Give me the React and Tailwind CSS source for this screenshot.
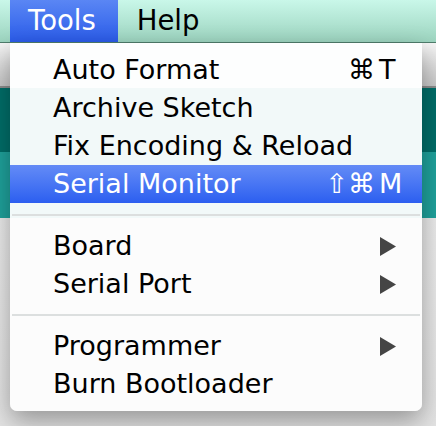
import React from 'react';

const font = { fontFamily: '"DejaVu Sans", "Liberation Sans", sans-serif' };

const Arrow = () => (
  <svg width="16" height="19" viewBox="0 0 16 19">
    <polygon points="0,0 16,9.5 0,19" fill="#454545" />
  </svg>
);

const Item = ({ label, mods, keyChar, submenu, active }) => (
  <div
    className={`relative flex h-[38px] items-center pl-[43px] text-[27px] leading-[38px] ${
      active ? 'bg-gradient-to-b from-[#648bf6] to-[#2c5ef0] text-white' : 'text-black'
    }`}
  >
    <span className="flex-1 whitespace-nowrap">{label}</span>
    {keyChar && (
      <span className="flex pr-[20px]">
        <span className="text-right">{mods}</span>
        <span className="w-[27px] pl-[4px] text-left">{keyChar}</span>
      </span>
    )}
    {submenu && (
      <span className="flex pr-[26px]">
        <Arrow />
      </span>
    )}
  </div>
);

const Separator = () => (
  <div className="px-[2px] py-[11px]">
    <div className="h-[2px] bg-[#dcdfdf]" />
  </div>
);

export default function App() {
  return (
    <div className="relative h-[426px] w-[436px] overflow-hidden bg-[#e9e9e9]" style={font}>
      {/* menu bar */}
      <div className="flex h-[43px] items-stretch border-b border-[#4f7d6c] bg-gradient-to-b from-[#c9f7e9] to-[#9cd4bf] pl-[10px] text-[27.5px] text-black">
        <div className="flex items-center bg-gradient-to-b from-[#5a86f4] to-[#2b5be9] pl-[18px] pr-[22px] text-white">Tools</div>
        <div className="flex items-center px-[19px]">Help</div>
      </div>

      {/* window behind the menu */}
      <div className="h-[43px] bg-gradient-to-b from-[#f6f6f6] to-[#c9c9c9]" />
      <div className="h-[2px] bg-[#8d8d8d]" />
      <div className="h-[64px] bg-[#006e69]" />
      <div className="h-[66px] bg-[#1fa29c]" />
      <div className="h-[208px] bg-gradient-to-b from-[#ececec] to-[#e4e4e4]" />

      {/* dropdown */}
      <div className="absolute left-[10px] top-[43px] w-[412px] rounded-b-[7px] bg-[linear-gradient(to_bottom,#fdfefe_45px,#f2f9f9_45px,#f2f9f9_175px,#fcfcfc_175px)] pb-[8px] pt-[8px] shadow-[0_10px_26px_rgba(0,0,0,0.35)]">
        <Item label="Auto Format" mods="⌘" keyChar="T" />
        <Item label="Archive Sketch" />
        <Item label="Fix Encoding & Reload" />
        <Item label="Serial Monitor" mods="⇧⌘" keyChar="M" active />
        <Separator />
        <Item label="Board" submenu />
        <Item label="Serial Port" submenu />
        <Separator />
        <Item label="Programmer" submenu />
        <Item label="Burn Bootloader" />
      </div>
    </div>
  );
}
